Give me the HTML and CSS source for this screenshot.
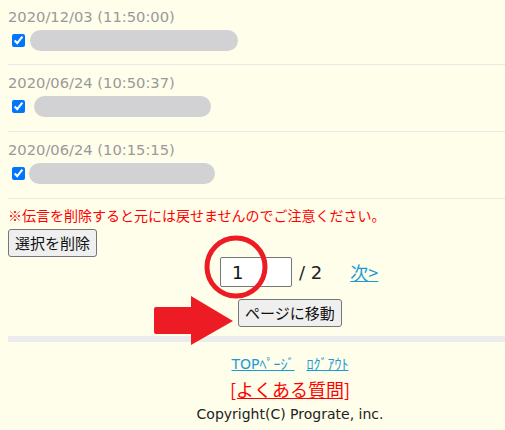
FILE: index.html
```html
<!DOCTYPE html>
<html lang="ja">
<head>
<meta charset="utf-8">
<title>伝言一覧</title>
<link rel="stylesheet" href="styles.css">
</head>
<body>
<div class="page">
  <ul class="messages">
    <li class="msg">
      <div class="msg-date">2020/12/03 (11:50:00)</div>
      <label class="msg-row"><input type="checkbox" checked><span class="msg-body" style="margin-left:2px;width:208px"></span></label>
    </li>
    <li class="msg">
      <div class="msg-date">2020/06/24 (10:50:37)</div>
      <label class="msg-row"><input type="checkbox" checked><span class="msg-body" style="margin-left:6px;width:177px"></span></label>
    </li>
    <li class="msg">
      <div class="msg-date">2020/06/24 (10:15:15)</div>
      <label class="msg-row"><input type="checkbox" checked><span class="msg-body" style="margin-left:1px;width:186px"></span></label>
    </li>
  </ul>

  <p class="notice">※伝言を削除すると元には戻せませんのでご注意ください。</p>
  <button class="btn" type="button">選択を削除</button>

  <div class="pager">
    <input class="page-input" type="text" value="1">
    <span class="page-total">/ 2</span>
    <a class="page-next" href="#">次&gt;</a>
  </div>
  <div class="pager-go">
    <button class="btn" type="button">ページに移動</button>
  </div>

  <div class="bar"></div>

  <footer class="footer">
    <div class="footer-links"><a href="#">TOPﾍﾟｰｼﾞ</a><a href="#">ﾛｸﾞｱｳﾄ</a></div>
    <div class="faq"><a href="#">[よくある質問]</a></div>
    <div class="copy">Copyright(C) Prograte, inc.</div>
  </footer>

  <svg class="mark-circle" width="64" height="64" viewBox="0 0 64 64" aria-hidden="true">
    <circle cx="32" cy="32" r="29" fill="none" stroke="#ed1c24" stroke-width="5"/>
  </svg>
  <svg class="mark-arrow" width="80" height="50" viewBox="0 0 80 50" aria-hidden="true">
    <path d="M2 11 H37 V0 L79 25 L37 49 V38 H2 Q0 38 0 36 V13 Q0 11 2 11 Z" fill="#ed1c24"/>
  </svg>
</div>
</body>
</html>
```
FILE: styles.css
```css
body {
  margin: 0 0 0 8px;
  background: #fffeeb;
  font-family: "DejaVu Sans", "Noto Sans CJK JP", sans-serif;
  font-size: 14px;
  color: #222;
}
.page {
  position: relative;
}
.messages {
  list-style: none;
  margin: 0;
  padding: 0;
}
.msg {
  padding: 8px 0 14px;
  border-bottom: 1px solid #e8e8e4;
}
.msg:first-child {
  padding: 7px 0 13px;
}
.msg-date {
  line-height: 20px;
  font-size: 14.7px;
  color: #999;
}
.msg-row {
  display: flex;
  align-items: center;
  height: 21px;
  margin-top: 3px;
}
.msg-row input {
  margin: 0 3px 0 4px;
  width: 13px;
  height: 13px;
}
.msg-body {
  display: block;
  height: 21px;
  border-radius: 11px;
  background: #d2d2d4;
}
.notice {
  margin: 6px 0 4px;
  line-height: 20px;
  font-family: "Noto Sans CJK JP", sans-serif;
  color: #ff0000;
}
.btn {
  font-family: "Noto Sans CJK JP", sans-serif;
  font-size: 15px;
  line-height: 20px;
  padding: 3px 6px;
  color: #111;
  background: #efefef;
  border: 1px solid #767676;
  border-radius: 3px;
}
.pager {
  display: flex;
  align-items: center;
  margin-left: 212px;
  height: 30px;
  font-size: 18px;
}
.page-input {
  box-sizing: border-box;
  width: 72px;
  height: 30px;
  padding: 0 11px;
  border: 1px solid #767676;
  border-radius: 2px;
  background: #fff;
  font-family: "DejaVu Sans", sans-serif;
  font-size: 18px;
  color: #111;
}
.page-total {
  margin-left: 7px;
  color: #222;
}
.page-next {
  margin-left: 28px;
  color: #1e9bd7;
  font-family: "Noto Sans CJK JP", "DejaVu Sans", sans-serif;
}
.pager-go {
  margin: 12px 0 0 230px;
}
.bar {
  height: 6px;
  margin-top: 9px;
  background: #ececec;
}
.footer {
  padding: 12px 0 0 67px;
  text-align: center;
}
.footer-links {
  line-height: 20px;
  display: flex;
  justify-content: center;
  gap: 12px;
}
.footer-links a {
  color: #1e9bd7;
}
.faq {
  line-height: 30px;
  font-size: 18px;
  font-family: "Noto Sans CJK JP", sans-serif;
}
.faq a {
  color: #ff0000;
}
.copy {
  line-height: 20px;
  color: #222;
}
.mark-circle {
  position: absolute;
  left: 196px;
  top: 235px;
}
.mark-arrow {
  position: absolute;
  left: 146px;
  top: 296px;
}
```
